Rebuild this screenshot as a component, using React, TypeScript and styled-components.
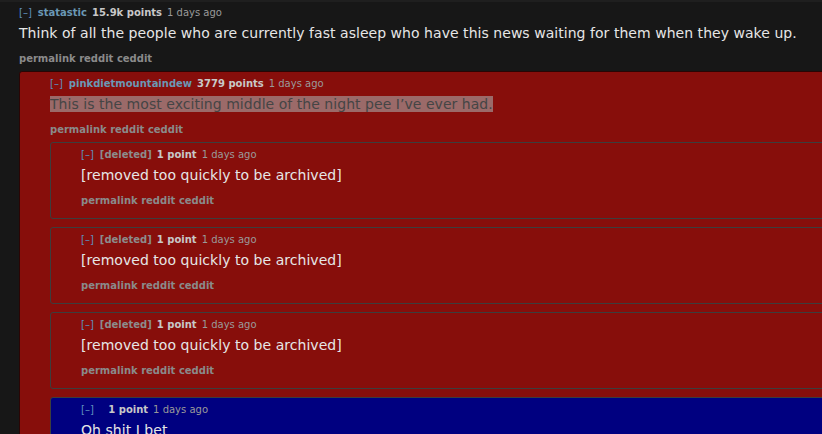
import { createGlobalStyle, styled } from 'styled-components'

type CommentData = {
  id: number
  author?: string
  deleted?: boolean
  points: string
  age: string
  body: string
  highlight?: boolean
  tone?: 'red' | 'blue'
  replies?: CommentData[]
}

const removed = '[removed too quickly to be archived]'

const thread: CommentData = {
  id: 1,
  author: 'statastic',
  points: '15.9k points',
  age: '1 days ago',
  body: 'Think of all the people who are currently fast asleep who have this news waiting for them when they wake up.',
  replies: [
    {
      id: 2,
      author: 'pinkdietmountaindew',
      points: '3779 points',
      age: '1 days ago',
      body: 'This is the most exciting middle of the night pee I’ve ever had.',
      highlight: true,
      tone: 'red',
      replies: [
        { id: 3, deleted: true, points: '1 point', age: '1 days ago', body: removed, tone: 'red' },
        { id: 4, deleted: true, points: '1 point', age: '1 days ago', body: removed, tone: 'red' },
        { id: 5, deleted: true, points: '1 point', age: '1 days ago', body: removed, tone: 'red' },
        { id: 6, points: '1 point', age: '1 days ago', body: 'Oh shit I bet', tone: 'blue' },
      ],
    },
  ],
}

function Comment({ c, nested }: { c: CommentData, nested?: boolean }) {
  const content = <>
    <Header>
      <Toggle>[–]</Toggle>
      {c.deleted
        ? <Deleted>[deleted]</Deleted>
        : <Author>{c.author ?? '\u00a0'}</Author>}
      <Points>{c.points}</Points>
      <Age>{c.age}</Age>
    </Header>
    <Body>{c.highlight ? <Marked>{c.body}</Marked> : c.body}</Body>
    <Links>
      <a>permalink</a> <a>reddit</a> <a>ceddit</a>
    </Links>
    {c.replies && <Replies>
      {c.replies.map(r => <Comment key={r.id} c={r} nested />)}
    </Replies>}
  </>

  if (!nested) return <TopComment>{content}</TopComment>
  return <Box $tone={c.tone ?? 'red'} $outer={!!c.replies}>{content}</Box>
}

export default function App() {
  return <>
    <GlobalStyle />
    <Page>
      <Comment c={thread} />
    </Page>
  </>
}

const GlobalStyle = createGlobalStyle`
  body {
    margin: 0;
    background: #171717;
    font-family: "DejaVu Sans", Verdana, sans-serif;
    overflow: hidden;
  }
`
const Page = styled.div`
  border-top: 2px solid #1f1f1f;
  padding: 4px 0 0 19px;
  overflow: hidden;
`
const TopComment = styled.div``
const Box = styled.div<{ $tone: 'red' | 'blue', $outer: boolean }>`
  background: ${p => p.$tone === 'blue' ? '#000080' : '#870e0b'};
  border: 1px solid ${p => p.$outer ? '#2a0504' : '#3d3d3d'};
  border-radius: 3px;
  padding: 5px 0 10px 30px;
  margin-right: -60px;

  & + & {
    margin-top: 8px;
  }
`
const Header = styled.div`
  font-size: 10px;
  line-height: 14px;
  white-space: nowrap;
  display: flex;
  gap: 5px;
`
const Toggle = styled.span`
  color: #5f8fbf;
  margin-right: 1px;
`
const Author = styled.span`
  color: #6a98b5;
  font-weight: bold;
`
const Deleted = styled.span`
  color: #8c8c8c;
  font-weight: bold;
`
const Points = styled.span`
  color: #c8c8c8;
  font-weight: bold;
`
const Age = styled.span`
  color: #9a9a9a;
`
const Body = styled.div`
  margin-top: 3px;
  font-size: 14px;
  line-height: 20px;
  letter-spacing: 0.04px;
  color: #e6e6e6;
  white-space: nowrap;
`
const Marked = styled.span`
  background: #9b6a69;
  color: #454545;
`
const Links = styled.div`
  margin-top: 9px;
  font-size: 10px;
  line-height: 14px;
  font-weight: bold;
  color: #8a8a8a;

  a { color: inherit; }
`
const Replies = styled.div`
  margin-top: 5px;
`
